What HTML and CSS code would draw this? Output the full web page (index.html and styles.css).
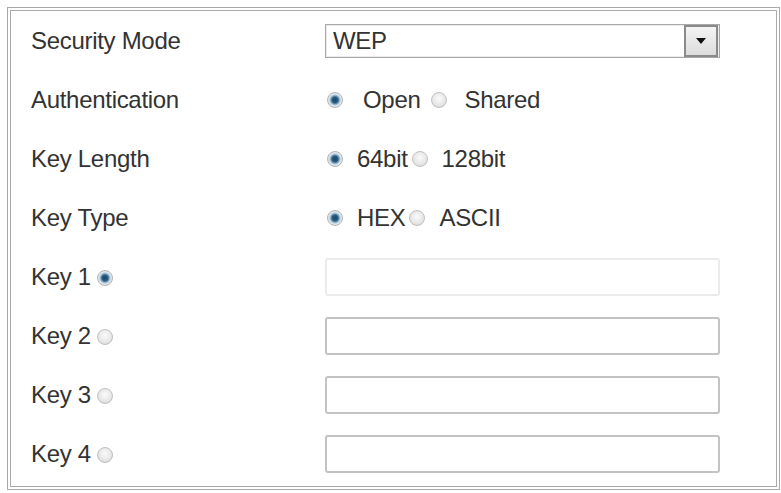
FILE: index.html
```html
<!DOCTYPE html>
<html>
<head>
<meta charset="utf-8">
<link rel="stylesheet" href="styles.css">
</head>
<body>
<div class="frame">
  <div class="row">
    <div class="label">Security Mode</div>
    <div class="ctrl">
      <div class="select"><span class="val">WEP</span><span class="btn"><i class="tri"></i></span></div>
    </div>
  </div>
  <div class="row">
    <div class="label">Authentication</div>
    <div class="ctrl opts">
      <span class="radio on r-first wide"></span><span class="opt">Open</span>
      <span class="radio r-mid wide"></span><span class="opt">Shared</span>
    </div>
  </div>
  <div class="row">
    <div class="label">Key Length</div>
    <div class="ctrl opts">
      <span class="radio on r-first"></span><span class="opt">64bit</span>
      <span class="radio r-mid"></span><span class="opt">128bit</span>
    </div>
  </div>
  <div class="row">
    <div class="label">Key Type</div>
    <div class="ctrl opts">
      <span class="radio on r-first"></span><span class="opt">HEX</span>
      <span class="radio r-mid"></span><span class="opt">ASCII</span>
    </div>
  </div>
  <div class="row">
    <div class="label">Key 1<span class="radio on r-key"></span></div>
    <div class="ctrl"><div class="field disabled"></div></div>
  </div>
  <div class="row">
    <div class="label">Key 2<span class="radio r-key"></span></div>
    <div class="ctrl"><div class="field"></div></div>
  </div>
  <div class="row">
    <div class="label">Key 3<span class="radio r-key"></span></div>
    <div class="ctrl"><div class="field"></div></div>
  </div>
  <div class="row">
    <div class="label">Key 4<span class="radio r-key"></span></div>
    <div class="ctrl"><div class="field"></div></div>
  </div>
</div>
</body>
</html>
```

FILE: styles.css
```css
html, body {
  margin: 0;
  padding: 0;
  background: #fff;
}
body {
  font-family: "Liberation Sans", Arial, sans-serif;
  font-size: 24px;
  letter-spacing: -0.3px;
  color: #333333;
}
.frame {
  margin: 7px 1px 0 7px;
  border: 4px double #aaaaaa;
  padding: 0 0 3px 20px;
  box-sizing: border-box;
}
.row {
  display: grid;
  grid-template-columns: 294px 395px;
  height: 59px;
  align-items: center;
}
.label {
  display: flex;
  align-items: center;
}
.ctrl {
  display: flex;
  align-items: center;
}
.select {
  width: 395px;
  height: 34px;
  box-sizing: border-box;
  border: 1px solid #a8a8a8;
  box-shadow: inset 0 0 0 1px #ececec;
  display: flex;
  align-items: center;
  justify-content: space-between;
  padding: 0 1px 0 7px;
  background: #fff;
}
.val {
  font-size: 24px;
  color: #333;
}
.btn {
  width: 34px;
  height: 32px;
  box-sizing: border-box;
  border: 2px solid #8a8a8a;
  background: linear-gradient(#f4f4f4, #dcdcdc);
  display: flex;
  align-items: center;
  justify-content: center;
}
.tri {
  width: 0;
  height: 0;
  border-left: 5px solid transparent;
  border-right: 5px solid transparent;
  border-top: 6px solid #111;
}
.radio {
  display: inline-block;
  width: 16px;
  height: 16px;
  border-radius: 50%;
  box-sizing: border-box;
  border: 1px solid #c0c0c0;
  background: radial-gradient(circle at 50% 40%, #fafafa 0, #e6e6e6 60%, #d0d0d0 100%);
  flex: none;
}
.radio.on {
  border-color: #b4b4b4;
  background: radial-gradient(circle, #1d4566 0, #2b5e82 3px, #8fb3cc 4.5px, #e2e8ec 6px, #d0d4d8 100%);
}
.r-first { margin: 0 14px 0 2px; }
.r-first.wide { margin-right: 20px; }
.r-mid { margin: 0 14px 0 4px; }
.r-mid.wide { margin: 0 18px 0 10px; }
.r-key { margin-left: 6px; margin-top: 2px; }
.field {
  width: 395px;
  height: 38px;
  box-sizing: border-box;
  border: 2px solid #c3c3c3;
  border-radius: 3px;
  background: #fff;
}
.field.disabled {
  border-color: #ebebeb;
}
```
